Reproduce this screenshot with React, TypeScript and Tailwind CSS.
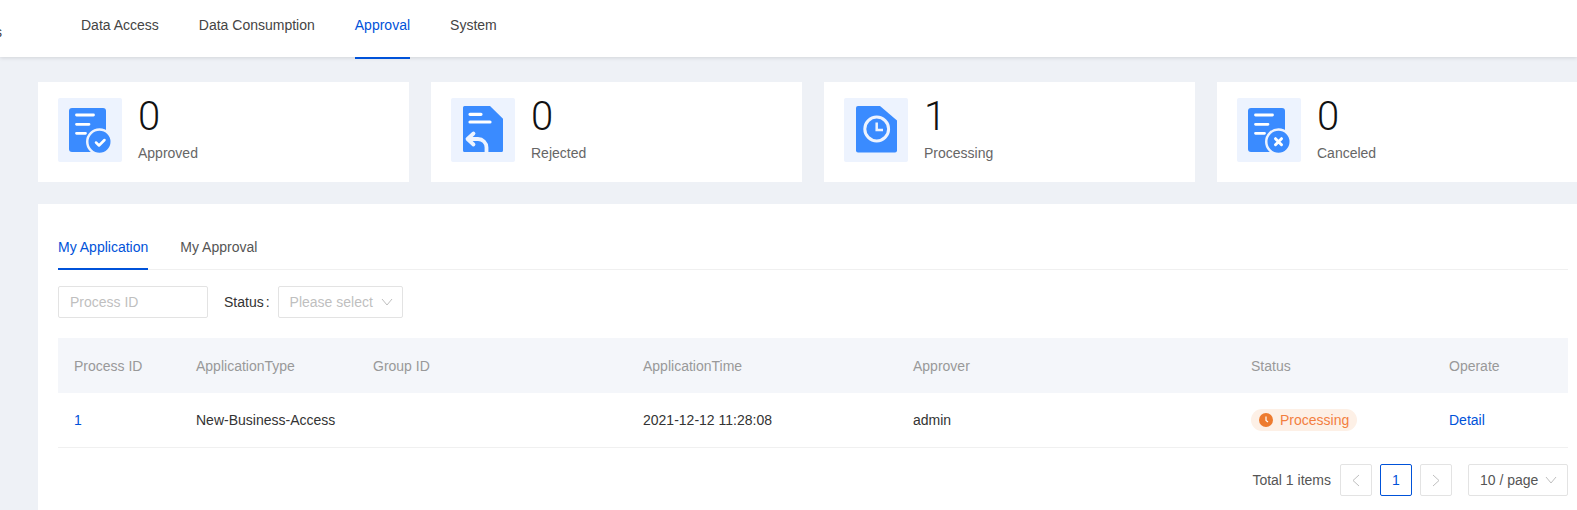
import React from 'react';

const fontSans = "font-['Liberation_Sans',Arial,sans-serif]";

const navItems = ['Data Access', 'Data Consumption', 'Approval', 'System'];

const columns = [
    { label: 'Process ID' },
    { label: 'ApplicationType' },
    { label: 'Group ID' },
    { label: 'ApplicationTime' },
    { label: 'Approver' },
    { label: 'Status' },
    { label: 'Operate' },
];

const gridCols = 'grid grid-cols-[122px_177px_270px_270px_338px_198px_135px]';

function ApprovedIcon() {
    return (
        <svg width="46" height="48" viewBox="0 0 46 48" fill="none">
            <rect x="0" y="2" width="37" height="44" rx="3" fill="#3a8bff" />
            <path d="M7.500 9h17M7.500 18.300h12.500M7.500 27.300h9" stroke="#fff" strokeWidth="2.800" strokeLinecap="round" />
            <circle cx="30.500" cy="35.700" r="12.250" fill="#3a8bff" stroke="#edf3fe" strokeWidth="2.500" />
            <path d="M27 36.500l3 3 5.500-5.500" stroke="#fff" strokeWidth="2.500" strokeLinecap="round" strokeLinejoin="round" />
        </svg>
    );
}

function RejectedIcon() {
    return (
        <svg width="40" height="48" viewBox="0 0 40 48" fill="none">
            <path d="M1.500 0H27l13 12.700V44.500a1.500 1.500 0 0 1-1.500 1.500H1.500A1.500 1.500 0 0 1 0 44.500V1.500A1.500 1.500 0 0 1 1.500 0z" fill="#3a8bff" />
            <path d="M7 8.300h11M7 16h20" stroke="#fff" strokeWidth="3.200" strokeLinecap="round" />
            <path d="M10.500 27.500L4.500 33l6 5.500M5.500 33H15a8.500 8.500 0 0 1 8.500 8.500V46" stroke="#eef4ff" strokeWidth="3.800" strokeLinecap="round" strokeLinejoin="round" />
        </svg>
    );
}

function ProcessingIcon() {
    return (
        <svg width="41" height="48" viewBox="0 0 41 48" fill="none">
            <path d="M2 0h22l17 14.500V44.500a2 2 0 0 1-2 2H2a2 2 0 0 1-2-2V2a2 2 0 0 1 2-2z" fill="#3a8bff" />
            <circle cx="20.700" cy="23" r="11.900" stroke="#edf3fe" strokeWidth="3" />
            <path d="M20.700 16.500V24H27" stroke="#edf3fe" strokeWidth="2.500" />
        </svg>
    );
}

function CanceledIcon() {
    return (
        <svg width="46" height="48" viewBox="0 0 46 48" fill="none">
            <rect x="0" y="2" width="37" height="44" rx="3" fill="#3a8bff" />
            <path d="M7.500 9h17M7.500 18.300h12.500M7.500 27.300h9" stroke="#fff" strokeWidth="2.800" strokeLinecap="round" />
            <circle cx="30.500" cy="35.700" r="12.250" fill="#3a8bff" stroke="#edf3fe" strokeWidth="2.500" />
            <path d="M27.500 32.700l6 6M33.500 32.700l-6 6" stroke="#fff" strokeWidth="3" strokeLinecap="round" />
        </svg>
    );
}

function Chevron({ dir }: { dir: 'down' | 'left' | 'right' }) {
    const d = dir === 'down' ? 'M1 3l5 6 5-6' : dir === 'left' ? 'M9 1L3 6.500 9 12' : 'M3 1l6 5.500L3 12';
    return (
        <svg width="12" height="13" viewBox="0 0 12 13" fill="none">
            <path d={d} stroke="#bfbfbf" strokeWidth="1" />
        </svg>
    );
}

const stats = [
    { value: '0', label: 'Approved', icon: <ApprovedIcon />, pad: 'pl-[11px]' },
    { value: '0', label: 'Rejected', icon: <RejectedIcon />, pad: 'pl-3' },
    { value: '1', label: 'Processing', icon: <ProcessingIcon />, pad: 'pl-3' },
    { value: '0', label: 'Canceled', icon: <CanceledIcon />, pad: 'pl-[11px]' },
];

export default function App() {
    return (
        <div className={`${fontSans} relative h-[510px] w-[1577px] overflow-hidden bg-[#eef1f6] text-sm text-[#333]`}>
            {/* Cabecera */}
            <header className="relative flex h-[57px] items-start gap-10 bg-white pl-[81px] shadow-[0_1px_4px_rgba(0,0,0,0.12)]">
                {navItems.map((item) => (
                    <a
                        key={item}
                        className={`relative h-[59px] pt-[15px] leading-5 ${item === 'Approval' ? 'border-b-2 border-[#0052d9] text-[#0052d9]' : 'text-[#444]'}`}
                    >
                        {item}
                    </a>
                ))}
                <span className="absolute -left-[5px] top-[22px] leading-5 text-[#444]">s</span>
            </header>

            <main className="w-[1550px] pl-[38px] pt-[25px]">
                {/* Tarjetas */}
                <div className="flex w-[1550px] gap-[22px]">
                    {stats.map((s) => (
                        <div key={s.label} className="flex h-[100px] flex-1 items-start bg-white px-5 pt-4">
                            <div className={`flex h-16 w-16 items-center rounded-[2px] bg-[#edf3fe] ${s.pad}`}>{s.icon}</div>
                            <div className="-mt-[1px] ml-4 flex flex-col">
                                <span className="h-[38px] font-['Roboto',sans-serif] text-[40px] font-light leading-10 text-[#111]">{s.value}</span>
                                <span className="mt-2 leading-5 text-[#666]">{s.label}</span>
                            </div>
                        </div>
                    ))}
                </div>

                {/* Panel principal */}
                <section className="mt-[22px] h-[400px] w-[1550px] bg-white px-5 pt-[30px]">
                    <div className="flex h-9 gap-8 border-b border-[#f0f0f0]">
                        <span className="h-9 border-b-2 border-[#0052d9] leading-[26px] text-[#0052d9]">My Application</span>
                        <span className="leading-[26px] text-[#555]">My Approval</span>
                    </div>

                    <div className="mt-4 flex items-center">
                        <div className="flex h-8 w-[150px] items-center rounded-[2px] border border-[#e3e3e3] px-[11px] text-[#bfbfbf]">Process ID</div>
                        <span className="ml-4 text-[#333]">Status</span>
                        <span className="ml-[2px] mr-2 text-[#333]">:</span>
                        <div className="flex h-8 w-[125px] items-center justify-between rounded-[2px] border border-[#e3e3e3] pl-[11px] pr-[9px] text-[#bfbfbf]">
                            Please select
                            <Chevron dir="down" />
                        </div>
                    </div>

                    {/* Tabla */}
                    <div className="mt-5">
                        <div className={`${gridCols} h-[55px] items-center bg-[#f4f6fa] text-[#999]`}>
                            {columns.map((c) => (
                                <div key={c.label} className="px-4">{c.label}</div>
                            ))}
                        </div>
                        <div className={`${gridCols} h-[55px] items-center border-b border-[#f0f0f0] text-[#333]`}>
                            <div className="px-4 text-[#0052d9]">1</div>
                            <div className="whitespace-nowrap px-4">New-Business-Access</div>
                            <div className="px-4" />
                            <div className="px-4">2021-12-12 11:28:08</div>
                            <div className="px-4">admin</div>
                            <div className="px-4">
                                <span className="inline-flex h-[22px] items-center gap-[7px] rounded-full bg-[#fdf0e6] pl-2 pr-2 text-[#f37f3f]">
                                    <svg width="14" height="14" viewBox="0 0 14 14">
                                        <circle cx="7" cy="7" r="7" fill="#ed7b2f" />
                                        <path d="M7 3.500v4l2 1.500" stroke="#fff" strokeWidth="1.200" fill="none" />
                                    </svg>
                                    Processing
                                </span>
                            </div>
                            <div className="px-4 text-[#0052d9]">Detail</div>
                        </div>
                    </div>

                    {/* Paginación */}
                    <div className="mt-4 flex items-center justify-end">
                        <span className="mr-[9px] text-[#555]">Total 1 items</span>
                        <div className="flex h-8 w-8 items-center justify-center rounded-[2px] border border-[#e3e3e3]"><Chevron dir="left" /></div>
                        <div className="ml-2 flex h-8 w-8 items-center justify-center rounded-[2px] border border-[#0052d9] text-[#0052d9]">1</div>
                        <div className="ml-2 flex h-8 w-8 items-center justify-center rounded-[2px] border border-[#e3e3e3]"><Chevron dir="right" /></div>
                        <div className="ml-4 flex h-8 w-[100px] items-center justify-between rounded-[2px] border border-[#e3e3e3] pl-[11px] pr-[10px] text-[#555]">
                            10 / page
                            <Chevron dir="down" />
                        </div>
                    </div>
                </section>
            </main>
        </div>
    );
}
